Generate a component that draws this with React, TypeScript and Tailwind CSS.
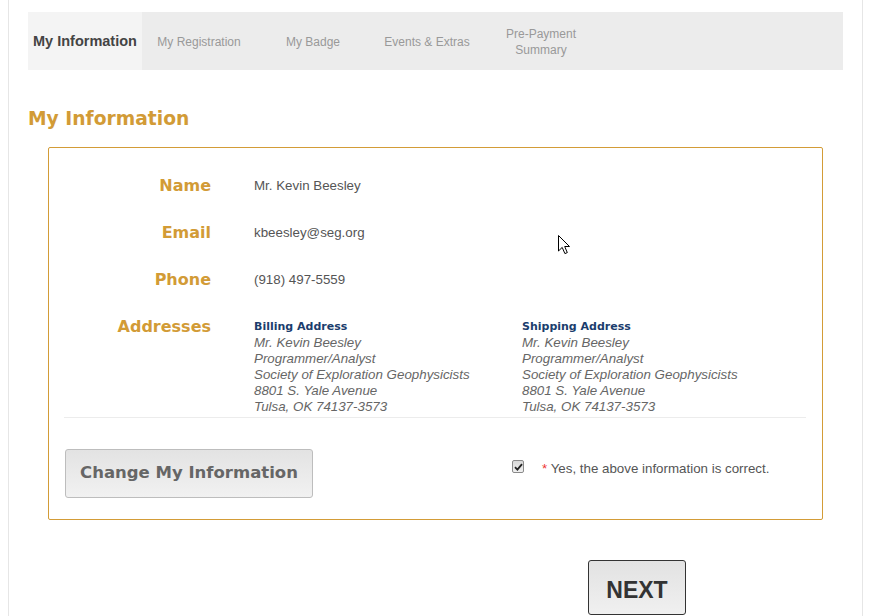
import { FC, ReactNode } from 'react';

// Вкладки мастера регистрации
const tabs = [
    { id: 'info', label: 'My Information', active: true },
    { id: 'registration', label: 'My Registration' },
    { id: 'badge', label: 'My Badge' },
    { id: 'events', label: 'Events & Extras' },
    { id: 'summary', label: 'Pre-Payment Summary', twoLines: true },
];

const address = [
    'Mr. Kevin Beesley',
    'Programmer/Analyst',
    'Society of Exploration Geophysicists',
    '8801 S. Yale Avenue',
    'Tulsa, OK 74137-3573',
];

const verdana = "font-['DejaVu_Sans',Verdana,sans-serif]";

const Label: FC<{ children: ReactNode }> = ({ children }) => (
    <div className={`w-[147px] shrink-0 text-right ${verdana} font-bold text-[16px] text-[#d29b36]`}>
        {children}
    </div>
);

const InfoRow: FC<{ label: string; value: string }> = ({ label, value }) => (
    <div className="flex h-[47px] items-center gap-[43px] leading-[20px]">
        <Label>{label}</Label>
        <div className="text-[13.33px] text-[#555]">{value}</div>
    </div>
);

const AddressBlock: FC<{ title: string }> = ({ title }) => (
    <div className="w-[268px] shrink-0 leading-[16px]">
        <div className={`${verdana} font-bold text-[11px] text-[#1b3d6d]`}>{title}</div>
        {address.map((line) => (
            <div key={line} className="italic text-[13.33px] text-[#666]">{line}</div>
        ))}
    </div>
);

const Cursor: FC = () => (
    <svg
        className="absolute left-[558px] top-[235px]"
        width="13"
        height="20"
        viewBox="0 0 13 20"
    >
        <path
            d="M0.5 0.5 L0.5 16 L4.2 12.4 L6.9 18.6 L9.3 17.6 L6.7 11.5 L11.5 11.5 Z"
            fill="#fff"
            stroke="#000"
            strokeWidth="1"
            strokeLinejoin="miter"
        />
    </svg>
);

const App: FC = () => {
    return (
        <div className="relative w-[876px] h-[616px] overflow-hidden bg-white font-['Liberation_Sans',Arial,sans-serif]">
            <div className="ml-[8px] w-[855px] h-full border-x border-[#e6e6e6] px-[19px] pt-[12px]">
                {/* Вкладки */}
                <div className="flex h-[58px] bg-[#ececec]">
                    {tabs.map((tab) => (
                        <div
                            key={tab.id}
                            className={`w-[114px] pt-[2px] flex items-center justify-center text-center ${
                                tab.active
                                    ? 'bg-[#f4f4f4] font-bold text-[14.5px] text-[#444]'
                                    : 'text-[12px] text-[#999] leading-[16px]'
                            }`}
                        >
                            {tab.twoLines ? (
                                <span>Pre-Payment<br />Summary</span>
                            ) : (
                                tab.label
                            )}
                        </div>
                    ))}
                </div>

                <h1 className={`mt-[37px] mb-[16px] ${verdana} font-bold text-[18.7px] leading-[24px] text-[#d29b36]`}>
                    My Information
                </h1>

                {/* Карточка с данными */}
                <div className="mx-[20px] border border-[#d39c37] rounded-[2px] pl-[15px] pr-[16px] pt-[14px] pb-[21px]">
                    <InfoRow label="Name" value="Mr. Kevin Beesley" />
                    <InfoRow label="Email" value="kbeesley@seg.org" />
                    <InfoRow label="Phone" value="(918) 497-5559" />

                    <div className="flex gap-[43px] pt-[16px] pb-[2px] border-b border-[#ececec]">
                        <div className="leading-[16px]">
                            <Label>Addresses</Label>
                        </div>
                        <div className="flex">
                            <AddressBlock title="Billing Address" />
                            <AddressBlock title="Shipping Address" />
                        </div>
                    </div>

                    <div className="flex items-start mt-[31px]">
                        <button
                            className={`ml-[1px] w-[248px] h-[49px] rounded-[3px] border border-[#bdbdbd] bg-gradient-to-b from-[#e3e3e3] to-[#f1f1f1] ${verdana} font-bold text-[16.5px] text-[#666]`}
                        >
                            Change My Information
                        </button>
                        <div className="ml-[199px] mt-[11px] flex items-start leading-[16px]">
                            <span className="w-[12px] h-[13px] rounded-[2px] border border-[#8a8a8a] bg-gradient-to-b from-[#d8d8d8] to-[#f0f0f0] flex items-center justify-center">
                                <svg width="9" height="8" viewBox="0 0 9 8">
                                    <path d="M1 4.2 L3.4 6.6 L8 1.2" fill="none" stroke="#222" strokeWidth="1.8" />
                                </svg>
                            </span>
                            <span className="ml-[18px] mt-[1px] text-[13.33px] text-[#555]">
                                <span className="text-[#ee3333]">*</span> Yes, the above information is correct.
                            </span>
                        </div>
                    </div>
                </div>

                <button className="mt-[40px] ml-[560px] w-[98px] h-[55px] rounded-[3px] border border-[#333] bg-gradient-to-b from-[#e2e2e2] to-[#f0f0f0] pt-[16px] pb-[11px] font-bold text-[23px] leading-[26px] text-[#333]">
                    NEXT
                </button>
            </div>

            <Cursor />
        </div>
    );
};

export default App;
